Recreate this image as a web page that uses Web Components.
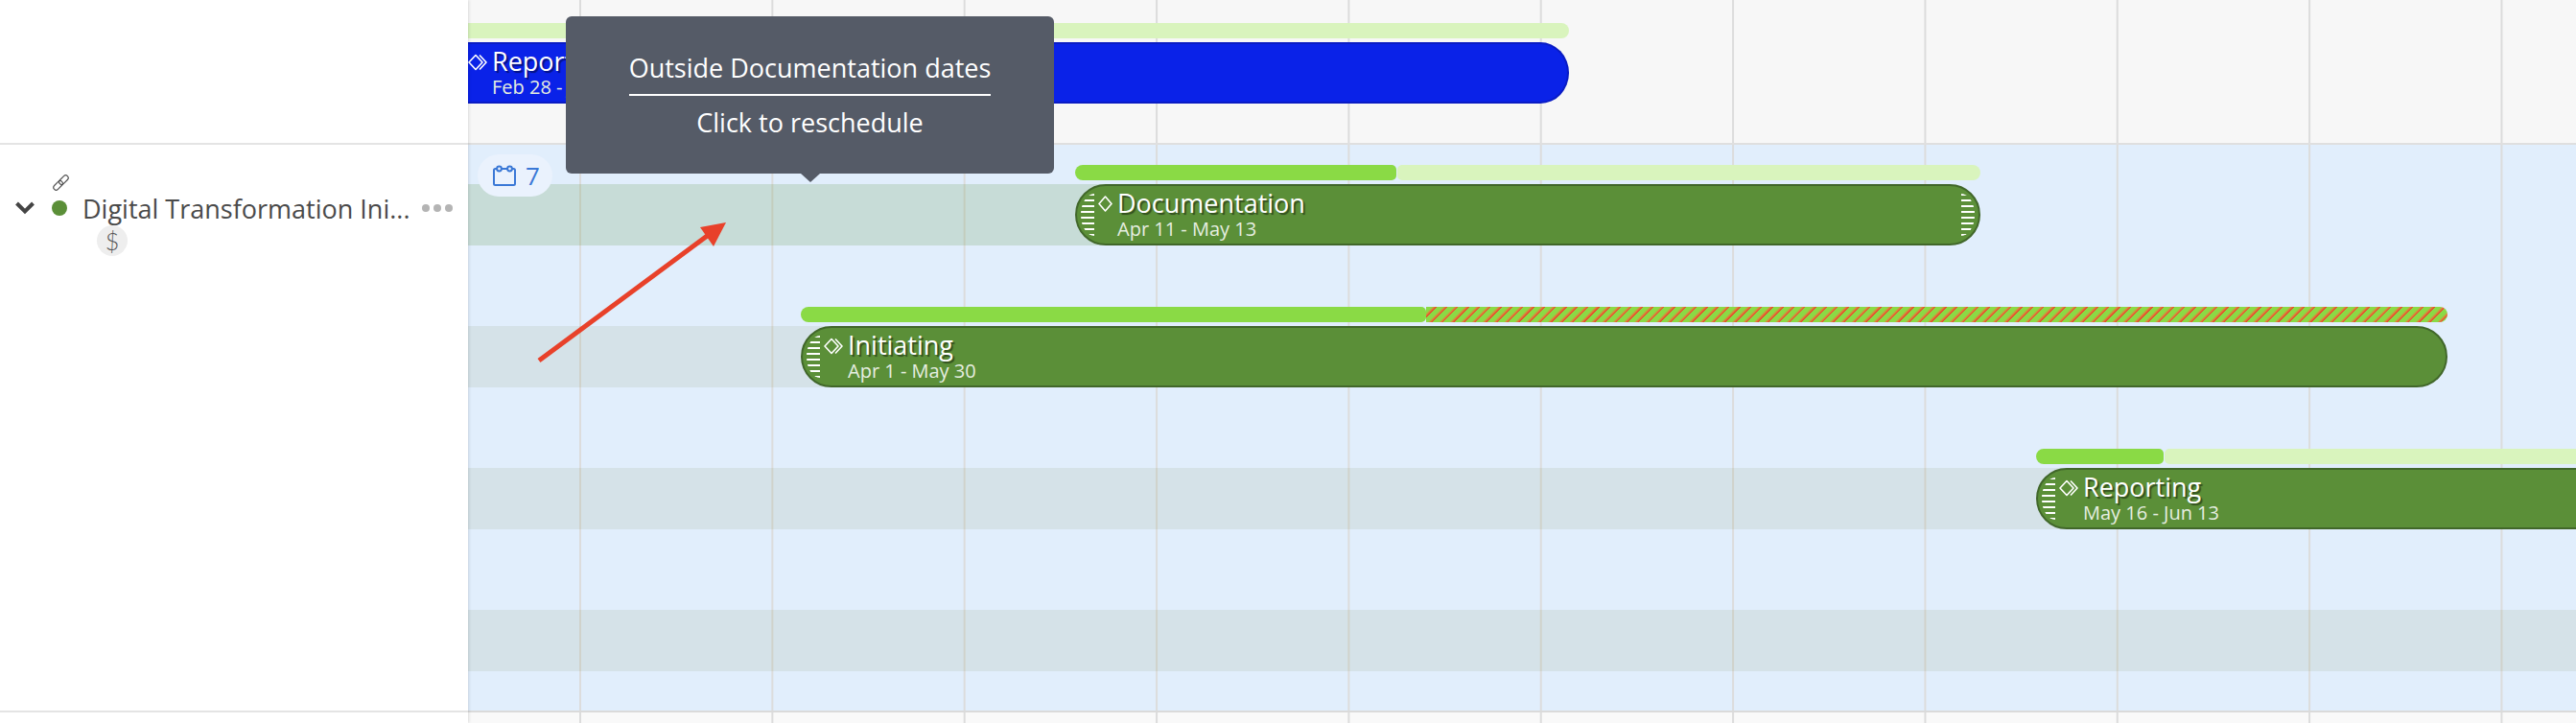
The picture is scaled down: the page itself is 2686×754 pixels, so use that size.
<!DOCTYPE html>
<html>
<head>
<meta charset="utf-8">
<title>Gantt</title>
<style>
html, body { margin: 0; padding: 0; height: 100%; background: #fff; overflow: hidden; }
</style>
</head>
<body>
<gantt-app>
    <project-panel slot="side">
        <span slot="name">Digital Transformation Ini...</span>
    </project-panel>

    <gantt-track slot="head" x="488" w="1148" light>
        <gantt-bar color="blue" icon="double" open="left">Reporting<span slot="dates">Feb 28 - Jun 13</span></gantt-bar>
    </gantt-track>

    <gantt-track x="1121" w="944" done="335" band="strong">
        <gantt-bar icon="single" handles="both">Documentation<span slot="dates">Apr 11 - May 13</span></gantt-bar>
    </gantt-track>
    <gantt-track x="835" w="1717" done="652" hatch>
        <gantt-bar icon="double" handles="left">Initiating<span slot="dates">Apr 1 - May 30</span></gantt-bar>
    </gantt-track>
    <gantt-track x="2123" w="800" done="133">
        <gantt-bar icon="double" handles="left">Reporting<span slot="dates">May 16 - Jun 13</span></gantt-bar>
    </gantt-track>
    <gantt-track x="488" w="2198" style="height:146px"></gantt-track>

    <task-pill slot="overlay">7</task-pill>
    <hint-tooltip slot="overlay">
        <span slot="title">Outside Documentation dates</span>
        Click to reschedule
    </hint-tooltip>
    <red-arrow slot="overlay"></red-arrow>
</gantt-app>

<script>
const FONT = '"Open Sans", "Noto Sans", sans-serif';
const GRID = `linear-gradient(to right, #dcdcdc 2px, transparent 2px)`;

class GanttApp extends HTMLElement {
    constructor(){
        super();
        this.attachShadow({mode:'open'});
        this.shadowRoot.innerHTML = `
<style>
:host{
    display: grid;
    grid-template-columns: 488px 1fr;
    width: 2686px;
    height: 754px;
    position: relative;
    overflow: hidden;
    font-family: ${FONT};
}
.side{
    position: relative;
    z-index: 2;
    background: #fff;
    display: flex;
    flex-direction: column;
    box-shadow: 1px 0 3px rgba(0,0,0,.12);
}
.side-head{ height: 149px; border-bottom: 2px solid #e4e4e4; }
.side-body{ height: 590px; border-bottom: 2px solid #e4e4e4; }
.chart{
    display: flex;
    flex-direction: column;
    min-width: 0;
}
.chart > div{
    background-image: ${GRID};
    background-size: 200.35px 100%;
    background-position: 116px 0;
}
.head{ height: 149px; background-color: #f7f7f7; border-bottom: 2px solid #dfdfdf; }
.body{ height: 590px; background-color: #e1eefc; border-bottom: 2px solid #dadada; }
.foot{ flex: 1; background-color: #f9f9f9; }
</style>
<div class="side">
    <div class="side-head"></div>
    <div class="side-body"><slot name="side"></slot></div>
</div>
<div class="chart">
    <div class="head"><slot name="head"></slot></div>
    <div class="body"><slot></slot></div>
    <div class="foot"></div>
</div>
<slot name="overlay"></slot>`;
    }
}

class ProjectPanel extends HTMLElement {
    constructor(){
        super();
        this.attachShadow({mode:'open'});
        this.shadowRoot.innerHTML = `
<style>
:host{ display: block; padding-top: 31px; color: #4a4a4a; font-family: ${FONT}; }
.link{ display: block; margin-left: 55px; width: 17px; height: 17px; }
.row{ display: flex; align-items: center; height: 36px; }
.chev{ margin-left: 16px; width: 20px; height: 14px; flex: none; }
.dot{ margin-left: 18px; width: 16px; height: 16px; border-radius: 50%; background: #5b8f38; flex: none; }
.name{ margin-left: 16px; font-size: 27px; font-weight: 500; white-space: nowrap; }
.more{ margin-left: auto; margin-right: 16px; display: flex; gap: 4px; }
.more i{ width: 8px; height: 8px; border-radius: 50%; background: #b4b4b4; }
.money{
    margin-left: 101px;
    width: 32px;
    height: 32px;
    border-radius: 50%;
    background: #eeeeee;
    display: flex;
    align-items: center;
    justify-content: center;
    font: 300 25px Lato, sans-serif;
    color: #555;
}
</style>
<svg class="link" viewBox="0 0 17 17" fill="none" stroke="#555" stroke-width="1.2">
    <rect x="-5.6" y="-2.7" width="11.2" height="5.4" rx="2.7" transform="translate(5.6 11.4) rotate(-45)"/>
    <rect x="-5.6" y="-2.7" width="11.2" height="5.4" rx="2.7" transform="translate(11.4 5.6) rotate(-45)"/>
</svg>
<div class="row">
    <svg class="chev" viewBox="0 0 20 14" fill="none" stroke="#444" stroke-width="4"><path d="M1.5 2 L10 10.5 L18.5 2"/></svg>
    <span class="dot"></span>
    <span class="name"><slot name="name"></slot></span>
    <span class="more"><i></i><i></i><i></i></span>
</div>
<div class="money">$</div>`;
    }
}

class GanttTrack extends HTMLElement {
    constructor(){
        super();
        this.attachShadow({mode:'open'});
        const x = +this.getAttribute('x') - 488;
        const w = +this.getAttribute('w');
        const done = this.getAttribute('done');
        const light = this.hasAttribute('light');
        const isHead = this.getAttribute('slot') === 'head';
        const band = this.getAttribute('band') === 'strong' ? 'rgba(91,143,56,.19)' : 'rgba(105,125,58,.1)';
        const bandW = this.childElementCount ? x + 32 : w;
        const rest = this.hasAttribute('hatch') ? 'hatch' : 'soft';
        let segs = '';
        if (light) segs = `<div class="seg soft only"></div>`;
        else if (done) segs = `<div class="seg solid" style="width:${done}px"></div><div class="seg ${rest}"></div>`;
        this.shadowRoot.innerHTML = `
<style>
:host{ display: block; position: relative; height: 148px; box-sizing: border-box; padding-top: ${isHead ? 24 : 21}px; }
.band{ position: absolute; left: 0; top: 41px; height: 64px; }
.line{ position: relative; height: 16px; margin: 0 0 4px ${x}px; width: ${w}px; display: flex; }
.seg{ height: 16px; }
.solid{ flex: none; background: #8ada45; border-radius: 8px 5px 5px 8px; }
.soft{ flex: 1; background: #d9f4bd; border-radius: 5px 8px 8px 5px; margin-left: 1px; }
.only{ margin-left: 0; border-radius: 0 8px 8px 0; }
.hatch{
    flex: 1;
    border-radius: 0 8px 8px 0;
    background: repeating-linear-gradient(135deg, #8ada45 0, #8ada45 4.5px, #d98a3a 6px, #e8412a 8px);
}
.barbox{ position: relative; margin-left: ${x}px; width: ${w}px; }
</style>
${isHead ? '' : `<div class="band" style="width:${bandW}px;background:${band}"></div>`}
<div class="line">${segs}</div>
<div class="barbox"><slot></slot></div>`;
    }
}

const ICONS = {
    single: `<svg width="15" height="17" viewBox="0 0 15 17" fill="none" stroke="#fff" stroke-width="1.6" stroke-linejoin="round"><path d="M7.5 1 L14 8.5 L7.5 16 L1 8.5 Z"/></svg>`,
    double: `<svg width="20" height="18" viewBox="0 0 20 18" fill="none" stroke="#fff" stroke-width="1.6" stroke-linejoin="round"><path d="M8 1.5 L15 9 L8 16.5 L1 9 Z"/><path d="M12 1.5 L19 9 L12 16.5"/></svg>`
};

class GanttBar extends HTMLElement {
    constructor(){
        super();
        this.attachShadow({mode:'open'});
        const blue = this.getAttribute('color') === 'blue';
        const handles = this.getAttribute('handles') || '';
        const open = this.getAttribute('open') === 'left';
        const icon = ICONS[this.getAttribute('icon')] || '';
        const lh = handles ? '<div class="grip left"></div>' : '';
        const rh = handles === 'both' ? '<div class="grip right"></div>' : '';
        this.shadowRoot.innerHTML = `
<style>
:host{ display: block; height: 64px; color: #fff; font-family: ${FONT}; }
.bar{
    box-sizing: border-box;
    height: 64px;
    display: flex;
    background: ${blue ? '#0a22e8' : '#5b8f38'};
    border: 2px solid ${blue ? '#0a1cc4' : '#41672a'};
    border-radius: ${open ? '0 30px 30px 0 / 0 32px 32px 0' : '32px'};
    padding: 0 ${handles === 'both' ? '4px' : '0'} 0 ${handles ? '4px' : '0'};
    ${open ? 'border-left: 0;' : ''}
    overflow: hidden;
}
.grip{
    flex: none;
    width: 14px;
    height: 44px;
    align-self: center;
    background: repeating-linear-gradient(to bottom, #fff 0, #fff 2px, transparent 2px, transparent 6px);
}
.left{ border-radius: 100% 0 0 100% / 50% 0 0 50%; margin-right: 4px; }
.right{ border-radius: 0 100% 100% 0 / 0 50% 50% 0; margin-left: auto; }
.icon{ flex: none; display: block; margin-top: 10px; line-height: 0; }
.text{ flex: none; margin-left: 5px; padding-top: 3px; white-space: nowrap; }
.title{ font-size: 27px; font-weight: 500; line-height: 30px; text-shadow: 2px 2px 1px rgba(0,0,0,.45); }
.dates{ font-size: 20px; line-height: 24px; color: #e6eee0; }
</style>
<div class="bar">
    ${lh}
    <div class="icon">${icon}</div>
    <div class="text">
        <div class="title"><slot></slot></div>
        <div class="dates"><slot name="dates"></slot></div>
    </div>
    ${rh}
</div>`;
    }
}

class TaskPill extends HTMLElement {
    constructor(){
        super();
        this.attachShadow({mode:'open'});
        this.shadowRoot.innerHTML = `
<style>
:host{
    position: absolute;
    z-index: 3;
    left: 498px;
    top: 161px;
    width: 78px;
    height: 44px;
    box-sizing: border-box;
    padding-left: 15px;
    border-radius: 22px;
    background: #eaf2fd;
    display: flex;
    align-items: center;
    gap: 10px;
    color: #3a78d6;
    font: 400 26px ${FONT};
}
</style>
<svg width="25" height="22" viewBox="0 0 25 22" fill="none" stroke="#3a78d6" stroke-width="2" stroke-linejoin="round">
    <rect x="2" y="4" width="22" height="17" rx="1.5"/>
    <circle cx="7.5" cy="4" r="2.4" fill="#eaf2fd"/>
    <circle cx="18.5" cy="4" r="2.4" fill="#eaf2fd"/>
</svg>
<span><slot></slot></span>`;
    }
}

class HintTooltip extends HTMLElement {
    constructor(){
        super();
        this.attachShadow({mode:'open'});
        this.shadowRoot.innerHTML = `
<style>
:host{
    position: absolute;
    z-index: 4;
    left: 590px;
    top: 17px;
    width: 509px;
    height: 164px;
    box-sizing: border-box;
    padding-top: 36px;
    border-radius: 6px;
    background: #555b67;
    color: #fff;
    font: 400 27px/36px ${FONT};
    display: flex;
    flex-direction: column;
    align-items: center;
}
.title{ padding-bottom: 9px; border-bottom: 2px solid #fff; }
.sub{ margin-top: 10px; }
.tip{
    position: absolute;
    left: 245px;
    top: 164px;
    width: 0;
    height: 0;
    border-left: 10px solid transparent;
    border-right: 10px solid transparent;
    border-top: 9px solid #555b67;
}
</style>
<div class="title"><slot name="title"></slot></div>
<div class="sub"><slot></slot></div>
<div class="tip"></div>`;
    }
}

class RedArrow extends HTMLElement {
    constructor(){
        super();
        this.attachShadow({mode:'open'});
        this.shadowRoot.innerHTML = `
<style>
:host{ position: absolute; z-index: 5; left: 0; top: 0; width: 2686px; height: 754px; pointer-events: none; }
svg{ display: block; }
</style>
<svg width="2686" height="754">
    <line x1="562" y1="376" x2="740" y2="244" stroke="#e8412a" stroke-width="5"/>
    <polygon points="757,232 730,237 744,257" fill="#e8412a"/>
</svg>`;
    }
}

window.customElements.define('gantt-app', GanttApp);
window.customElements.define('project-panel', ProjectPanel);
window.customElements.define('gantt-track', GanttTrack);
window.customElements.define('gantt-bar', GanttBar);
window.customElements.define('task-pill', TaskPill);
window.customElements.define('hint-tooltip', HintTooltip);
window.customElements.define('red-arrow', RedArrow);
</script>
</body>
</html>
